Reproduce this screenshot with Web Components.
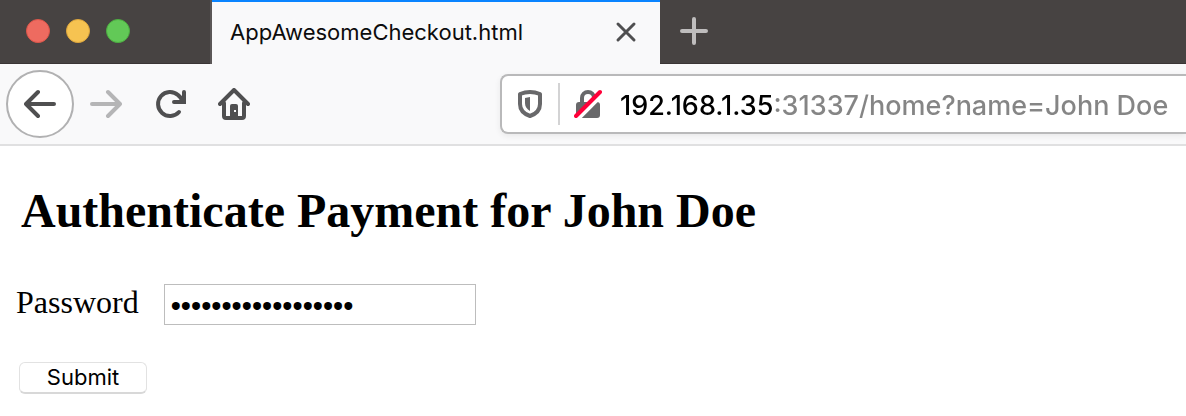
<!DOCTYPE html>
<html lang="en">
<head>
<meta charset="utf-8">
<title>AppAwesomeCheckout.html</title>
<style>
  body { margin: 0; background: #fff; color: #000; }
</style>
</head>
<body>
<browser-window>
  <tab-strip slot="tabs"><browser-tab>AppAwesomeCheckout.html</browser-tab></tab-strip>
  <nav-bar slot="toolbar"><address-bar url="192.168.1.35:31337/home?name=John Doe"></address-bar></nav-bar>
  <payment-form><span slot="name">John Doe</span></payment-form>
</browser-window>

<script>
function define(name, html, setup) {
  const template = document.createElement('template');
  template.innerHTML = html;
  customElements.define(name, class extends HTMLElement {
    constructor() {
      super();
      this.attachShadow({ mode: 'open' }).append(template.content.cloneNode(true));
    }
    connectedCallback() { if (setup) setup(this, this.shadowRoot); }
  });
}

define('browser-window', `
  <style>
    :host { display: block; overflow: hidden; font-family: Inter, "Liberation Sans", sans-serif; }
  </style>
  <header><slot name="tabs"></slot><slot name="toolbar"></slot></header>
  <main><slot></slot></main>`);

define('tab-strip', `
  <style>
    :host { display: flex; height: 64px; background: linear-gradient(#474342 63px, #3a3535 63px); }
    .lights { display: flex; gap: 16px; padding: 19px 0 0 26px; width: 184px; border-right: 2px solid #5b5757; }
    .lights button { width: 24px; height: 24px; padding: 0; border: 1px solid var(--edge); border-radius: 50%; }
    .close { background: #ee6b60; --edge: #dc5549; }
    .min { background: #f6c351; --edge: #dea63c; }
    .max { background: #62c957; --edge: #4cae40; }
    .add { display: flex; margin: 0; padding: 17px 20px; border: 0; background: none; }
  </style>
  <div class="lights">
    <button class="close" aria-label="Close window"></button>
    <button class="min" aria-label="Minimize window"></button>
    <button class="max" aria-label="Zoom window"></button>
  </div>
  <slot></slot>
  <button class="add" aria-label="New tab">
    <svg width="28" height="28" viewBox="0 0 28 28" stroke="#bfbdbd" stroke-width="4" stroke-linecap="round"><path d="M14 2v24M2 14h24"/></svg>
  </button>`);

define('browser-tab', `
  <style>
    :host { display: flex; box-sizing: border-box; width: 448px; height: 64px; padding: 0 20px 2px 18px;
      align-items: center; justify-content: space-between; background: #f9f9fa; border-top: 2px solid #0a84ff;
      color: #0c0c0d; font-size: 22px; line-height: 28px; }
    button { display: flex; padding: 0; border: 0; background: none; }
  </style>
  <span><slot></slot></span>
  <button aria-label="Close tab">
    <svg width="28" height="28" viewBox="0 0 28 28" stroke="#4f4f50" stroke-width="3" stroke-linecap="round"><path d="M6 6l16 16M22 6L6 22"/></svg>
  </button>`);

define('nav-bar', `
  <style>
    :host { display: flex; align-items: center; height: 80px; background: #f9f9fa; border-bottom: 2px solid #e0e0e1; }
    nav { display: flex; align-items: center; width: 500px; padding-left: 6px; box-sizing: border-box; flex: none; }
    button { display: flex; align-items: center; justify-content: center; width: 64px; height: 64px; padding: 0;
      border: 0; background: none; color: #4f4f50; }
    .back { width: 68px; height: 68px; border: 2px solid #b1b1b2; border-radius: 50%; background: #fff; }
    .forward { color: #b5b5b6; }
    svg { fill: none; stroke: currentColor; stroke-width: 4; stroke-linecap: round; stroke-linejoin: round; }
    ::slotted(*) { flex: 1; min-width: 0; }
  </style>
  <nav aria-label="Navigation">
    <button class="back" aria-label="Back"><svg width="32" height="32" viewBox="0 0 32 32"><path d="M30 16H2M14 4L2 16l12 12"/></svg></button>
    <button class="forward" aria-label="Forward"><svg width="32" height="32" viewBox="0 0 32 32"><path d="M2 16h28M18 4l12 12-12 12"/></svg></button>
    <button aria-label="Reload"><svg width="32" height="32" viewBox="0 0 32 32"><path d="M25 24A12 12 0 1 1 24 7l4 4"/><path d="M30 4v10H20" stroke-linejoin="miter"/><path d="M30 7v7h-7z" fill="currentColor" stroke="none"/></svg></button>
    <button aria-label="Home"><svg width="32" height="32" viewBox="0 0 32 32"><path d="M2 16L16 2l14 14M6 15v13q0 2 2 2h16q2 0 2-2V15"/><path d="M12 30V18q0-2 2-2h4q2 0 2 2v12z" fill="currentColor" stroke="none"/><path d="M17 22v2" stroke="#f9f9fa" stroke-width="2" stroke-linecap="butt"/></svg></button>
  </nav>
  <slot></slot>`);

define('address-bar', `
  <style>
    :host { display: flex; align-items: center; box-sizing: border-box; height: 60px; padding-left: 14px;
      background: #fff; border: 2px solid #b9b9ba; border-right: 0; border-radius: 8px 0 0 8px;
      box-shadow: 0 2px 6px #00000012; }
    button { display: flex; padding: 0; border: 0; background: none; }
    hr { width: 2px; height: 42px; margin: 0 14px; border: 0; background: #d3d3d4; }
    input { flex: 1; min-width: 0; margin: 0 0 0 18px; padding: 3px 0 0; border: 0; outline: 0; height: 40px;
      font: 500 27px/40px Inter, "Liberation Sans", sans-serif; color: #858585;
      -webkit-text-fill-color: transparent; -webkit-background-clip: text; background-clip: text;
      background-image: linear-gradient(90deg, #000 153px, #858585 153px); }
  </style>
  <button aria-label="Tracking protection"><svg width="28" height="32" viewBox="0 0 28 32"><path d="M14 4Q19 4 24 6V16c0 6-4 10-10 12C8 26 4 22 4 16V6Q9 4 14 4z" fill="none" stroke="#68686a" stroke-width="4" stroke-linejoin="round"/><path d="M14 9v14c-3-2-5-4-5-8v-5z" fill="#68686a"/></svg></button>
  <hr>
  <button aria-label="Connection is not secure"><svg width="28" height="32" viewBox="0 0 28 32"><path d="M8 16V10a6 6 0 0 1 12 0v6" fill="none" stroke="#68686a" stroke-width="4"/><rect x="2" y="14" width="24" height="16" rx="3" fill="#68686a"/><path d="M4 31L30 5" stroke="#fff" stroke-width="4"/><path d="M2 28L26 4" stroke="#ff0039" stroke-width="4" stroke-linecap="round"/></svg></button>
  <input type="text" aria-label="Address">`,
  (el, root) => { root.querySelector('input').value = el.getAttribute('url'); });

define('payment-form', `
  <style>
    :host { display: block; padding: 36px 16px 20px; font-family: "Liberation Serif", serif; }
    h2 { margin: 0 0 44px; padding-left: 5px; font-size: 48px; line-height: 58px; font-weight: 700; }
    .row { display: flex; align-items: flex-start; gap: 25px; font-size: 32px; line-height: 36px; }
    input { box-sizing: border-box; width: 312px; height: 41px; margin: 0; padding: 4px 6px 0; border: 1px solid #bdbdbd;
      border-radius: 0; outline: 0; background: #fff; color: #000; font: 29px/36px "Liberation Sans", sans-serif; }
    .submit { display: block; width: 128px; height: 32px; margin: 37px 0 0 3px; padding: 0 0 2px; border: 1px solid #e2e2e2;
      border-bottom: 2px solid #d8d8d8; border-radius: 6px; background: #fff; color: #000;
      font: 22px/28px Inter, "Liberation Sans", sans-serif; }
  </style>
  <form onsubmit="return false">
    <h2>Authenticate Payment for <slot name="name"></slot></h2>
    <div class="row">
      <label for="pw">Password</label>
      <input id="pw" type="password" value="abcdefghijklmnopqr">
    </div>
    <button class="submit" type="submit">Submit</button>
  </form>`);
</script>
</body>
</html>
